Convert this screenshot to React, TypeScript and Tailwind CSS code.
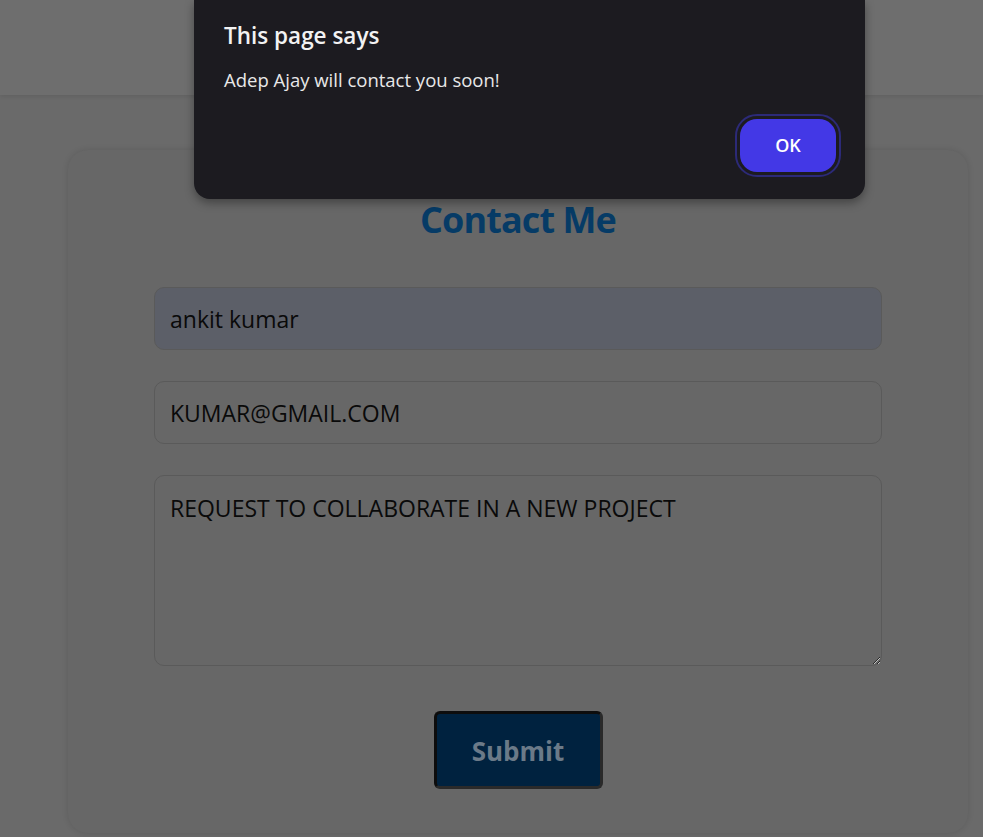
import React from "react";

const App = () => {
  return (
    <div className="relative min-h-[837px] bg-[#6a6a6a] font-['Open_Sans',sans-serif] overflow-hidden">
      <div className="h-[95px] bg-[#6e6e6e] shadow-[0_2px_4px_rgba(0,0,0,0.08)]" />

      <div className="px-[68px] pt-[55px] pb-[5px] pr-[15px]">
        <div className="rounded-[20px] bg-[#676767] shadow-[0_0_6px_rgba(0,0,0,0.12)] pt-[50px] pb-[44px] px-[86px] flex flex-col items-center">
          <h2 className="text-[36px] font-bold text-[#063b66] leading-[40px] tracking-tight">Contact Me</h2>

          <div className="mt-[47px] w-full flex flex-col gap-[31px]">
            <input
              readOnly
              value="ankit kumar"
              className="h-[63px] w-full rounded-[10px] border border-[#5a5a5a] bg-[#5c5f68] px-[15px] text-[23px] text-[#0a0a0a] outline-none"
            />
            <input
              readOnly
              value="KUMAR@GMAIL.COM"
              className="h-[63px] w-full rounded-[10px] border border-[#5a5a5a] bg-transparent px-[15px] text-[23px] text-[#0a0a0a] outline-none"
            />
            <textarea
              readOnly
              value="REQUEST TO COLLABORATE IN A NEW PROJECT"
              className="h-[191px] w-full rounded-[10px] border border-[#5a5a5a] bg-transparent px-[15px] pt-[15px] text-[23px] leading-[34px] text-[#0a0a0a] outline-none"
            />
          </div>

          <button
            type="button"
            className="mt-[45px] h-[78px] w-[169px] rounded-[6px] border-[3px] border-t-[#0d0d0d] border-l-[#0d0d0d] border-r-[#2a2a2a] border-b-[#2a2a2a] bg-[#00223f] pt-[3px] text-[26px] font-bold text-[#6b7a88]"
          >
            Submit
          </button>
        </div>
      </div>

      <div className="absolute left-[194px] top-0 w-[671px] h-[199px] rounded-b-[16px] bg-[#1c1b20] shadow-[0_4px_10px_rgba(0,0,0,0.35)] px-[30px] pt-[22px]">
        <div className="text-[22.5px] font-semibold text-[#f2f2f2] leading-[28px]">This page says</div>
        <div className="mt-[17px] text-[18.5px] text-[#e8e8e8] leading-[26px]">Adep Ajay will contact you soon!</div>
        <div className="flex justify-end mt-[21px]">
          <div className="mr-[-6px] rounded-[22px] border-[2px] border-[#2c2a78] p-[3px]">
            <button
              type="button"
              className="h-[53px] w-[96px] rounded-[17px] bg-[#4338e6] text-[18px] font-semibold text-white"
            >
              OK
            </button>
          </div>
        </div>
      </div>
    </div>
  );
};

export default App;
